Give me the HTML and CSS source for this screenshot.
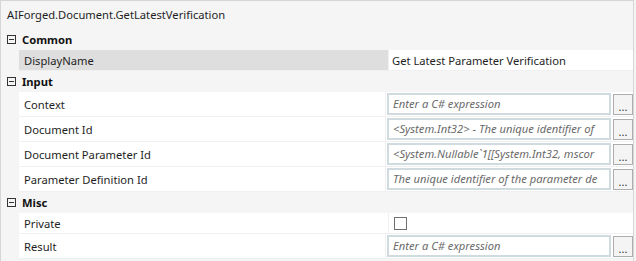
FILE: index.html
```html
<!DOCTYPE html>
<html lang="en">
<head>
  <meta charset="UTF-8" />
  <title>Properties</title>
  <link rel="stylesheet" href="styles.css">
</head>
<body>

  <div class="panel">
    <div class="title">AIForged.Document.GetLatestVerification</div>

    <div class="category">
      <span class="toggle"></span>
      <span class="cat-name">Common</span>
    </div>
    <div class="row selected">
      <div class="name">DisplayName</div>
      <div class="value text-value">Get Latest Parameter Verification</div>
    </div>

    <div class="category">
      <span class="toggle"></span>
      <span class="cat-name">Input</span>
    </div>
    <div class="row tall">
      <div class="name">Context</div>
      <div class="value">
        <div class="expr">Enter a C# expression</div>
        <button class="more">...</button>
      </div>
    </div>
    <div class="row tall">
      <div class="name">Document Id</div>
      <div class="value">
        <div class="expr">&lt;System.Int32&gt; - The unique identifier of</div>
        <button class="more">...</button>
      </div>
    </div>
    <div class="row tall">
      <div class="name">Document Parameter Id</div>
      <div class="value">
        <div class="expr">&lt;System.Nullable`1[[System.Int32, mscor</div>
        <button class="more">...</button>
      </div>
    </div>
    <div class="row tall">
      <div class="name">Parameter Definition Id</div>
      <div class="value">
        <div class="expr">The unique identifier of the parameter de</div>
        <button class="more">...</button>
      </div>
    </div>

    <div class="category">
      <span class="toggle"></span>
      <span class="cat-name">Misc</span>
    </div>
    <div class="row">
      <div class="name">Private</div>
      <div class="value">
        <span class="checkbox"></span>
      </div>
    </div>
    <div class="row tall">
      <div class="name">Result</div>
      <div class="value">
        <div class="expr">Enter a C# expression</div>
        <button class="more">...</button>
      </div>
    </div>
  </div>

</body>
</html>
```

FILE: styles.css
```css
body {
  margin: 0;
  background-color: #f5f5f5;
  font-family: "Noto Sans", "Open Sans", sans-serif;
  font-size: 11.2px;
  color: #1e1e1e;
}

.panel {
  width: 632px;
  height: 260px;
  border: 1px solid #d6d6d6;
  border-bottom: none;
  background-color: #f5f5f5;
  overflow: hidden;
}

.title {
  height: 28px;
  line-height: 27px;
  padding-left: 6px;
}

.category {
  height: 21px;
  display: flex;
  align-items: center;
}

.toggle {
  width: 7px;
  height: 7px;
  margin-left: 6px;
  border: 1px solid #333;
  position: relative;
}

.toggle::after {
  content: "";
  position: absolute;
  left: 1px;
  top: 3px;
  width: 5px;
  height: 1px;
  background-color: #333;
}

.cat-name {
  margin-left: 6px;
  font-weight: bold;
  color: #111;
}

.row {
  height: 20px;
  margin-left: 18px;
  display: flex;
  background-color: #fff;
  border-bottom: 1px solid #f0f0f0;
}

.row.tall {
  height: 24px;
}

.name {
  width: 364px;
  padding-left: 5px;
  display: flex;
  align-items: center;
}

.selected .name {
  background-color: #dedede;
}

.value {
  flex: 1;
  display: flex;
  align-items: center;
  padding-left: 1px;
  gap: 2px;
  border-left: 1px solid #f0f0f0;
}

.text-value {
  padding-left: 3px;
}

.expr {
  width: 212px;
  height: 18px;
  line-height: 18px;
  border: 2px solid #d0dbe0;
  padding: 0 4px;
  font-style: italic;
  color: #6a6a6a;
  white-space: nowrap;
  overflow: hidden;
  background-color: #fff;
}

.more {
  width: 20px;
  height: 21px;
  padding: 0;
  border: 1px solid #adadad;
  background-color: #f4f4f4;
  font-family: inherit;
  font-size: 11px;
  line-height: 24px;
  color: #333;
}

.checkbox {
  width: 11px;
  height: 11px;
  margin-left: 4px;
  border: 1px solid #707070;
  background-color: #fff;
}
```
